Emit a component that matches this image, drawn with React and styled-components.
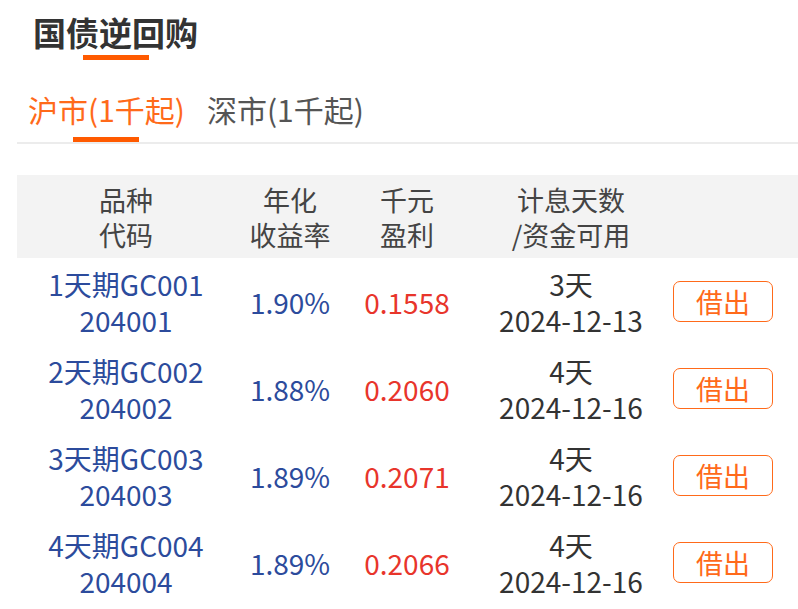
import React from "react";
import styled, { createGlobalStyle } from "styled-components";

const GlobalStyle = createGlobalStyle`
  body {
    margin: 0;
    background: #fff;
    font-family: "Noto Sans CJK SC", "Noto Sans", sans-serif;
  }
`;

const Page = styled.div`
  width: 798px;
  padding-left: 17px;
  box-sizing: border-box;
`;

const TitleBar = styled.div`
  display: inline-flex;
  flex-direction: column;
  align-items: center;
  margin-left: 16px;
  padding-top: 9px;
`;

const Title = styled.h1`
  margin: 0;
  font-size: 33px;
  line-height: 46px;
  font-weight: 700;
  color: #333;
`;

const Underline = styled.div`
  width: ${(p) => p.w}px;
  height: 5px;
  background: #ff5a00;
`;

const Tabs = styled.div`
  display: flex;
  gap: 22px;
  margin-top: 30px;
  border-bottom: 2px solid #ececec;
`;

const Tab = styled.div`
  display: flex;
  flex-direction: column;
  align-items: center;
  margin-left: ${(p) => (p.first ? "11px" : "0")};
  font-size: 30px;
  line-height: 38px;
  color: ${(p) => (p.active ? "#ff6a1a" : "#555")};
  & > div {
    visibility: ${(p) => (p.active ? "visible" : "hidden")};
    margin-top: 9px;
  }
`;

const Table = styled.div`
  margin-top: 31px;
`;

const cols = "218px 110px 124px 204px 100px";

const HeadRow = styled.div`
  display: grid;
  grid-template-columns: ${cols};
  height: 83px;
  align-items: center;
  background: #f3f3f3;
  font-size: 27px;
  line-height: 35px;
  color: #444;
  text-align: center;
`;

const Row = styled.div`
  display: grid;
  grid-template-columns: ${cols};
  height: 87px;
  align-items: center;
  font-size: 28px;
  line-height: 36px;
  text-align: center;
  &:first-of-type {
    margin-top: 2px;
  }
`;

const Cell = styled.div`
  color: ${(p) => p.color || "#333"};
  white-space: nowrap;
`;

const LendButton = styled.button`
  justify-self: center;
  width: 100px;
  height: 41px;
  border: 1.5px solid #ff6a1a;
  border-radius: 7px;
  background: #fff;
  color: #ff6a1a;
  font-family: inherit;
  font-size: 27px;
  line-height: 1;
  padding: 0;
`;

const rows = [
  { name: "1天期GC001", code: "204001", rate: "1.90%", profit: "0.1558", days: "3天", date: "2024-12-13" },
  { name: "2天期GC002", code: "204002", rate: "1.88%", profit: "0.2060", days: "4天", date: "2024-12-16" },
  { name: "3天期GC003", code: "204003", rate: "1.89%", profit: "0.2071", days: "4天", date: "2024-12-16" },
  { name: "4天期GC004", code: "204004", rate: "1.89%", profit: "0.2066", days: "4天", date: "2024-12-16" },
];

const BLUE = "#2c4b9c";
const RED = "#e8352b";

export default function App() {
  return (
    <Page>
      <GlobalStyle />
      <TitleBar>
        <Title>国债逆回购</Title>
        <Underline w={66} />
      </TitleBar>
      <Tabs>
        <Tab active first>
          沪市(1千起)
          <Underline w={66} />
        </Tab>
        <Tab>
          深市(1千起)
          <Underline w={66} />
        </Tab>
      </Tabs>
      <Table>
        <HeadRow>
          <Cell color="#444">品种<br />代码</Cell>
          <Cell color="#444">年化<br />收益率</Cell>
          <Cell color="#444">千元<br />盈利</Cell>
          <Cell color="#444">计息天数<br />/资金可用</Cell>
          <Cell />
        </HeadRow>
        {rows.map((r) => (
          <Row key={r.code}>
            <Cell color={BLUE}>{r.name}<br />{r.code}</Cell>
            <Cell color={BLUE}>{r.rate}</Cell>
            <Cell color={RED}>{r.profit}</Cell>
            <Cell>{r.days}<br />{r.date}</Cell>
            <LendButton>借出</LendButton>
          </Row>
        ))}
      </Table>
    </Page>
  );
}
